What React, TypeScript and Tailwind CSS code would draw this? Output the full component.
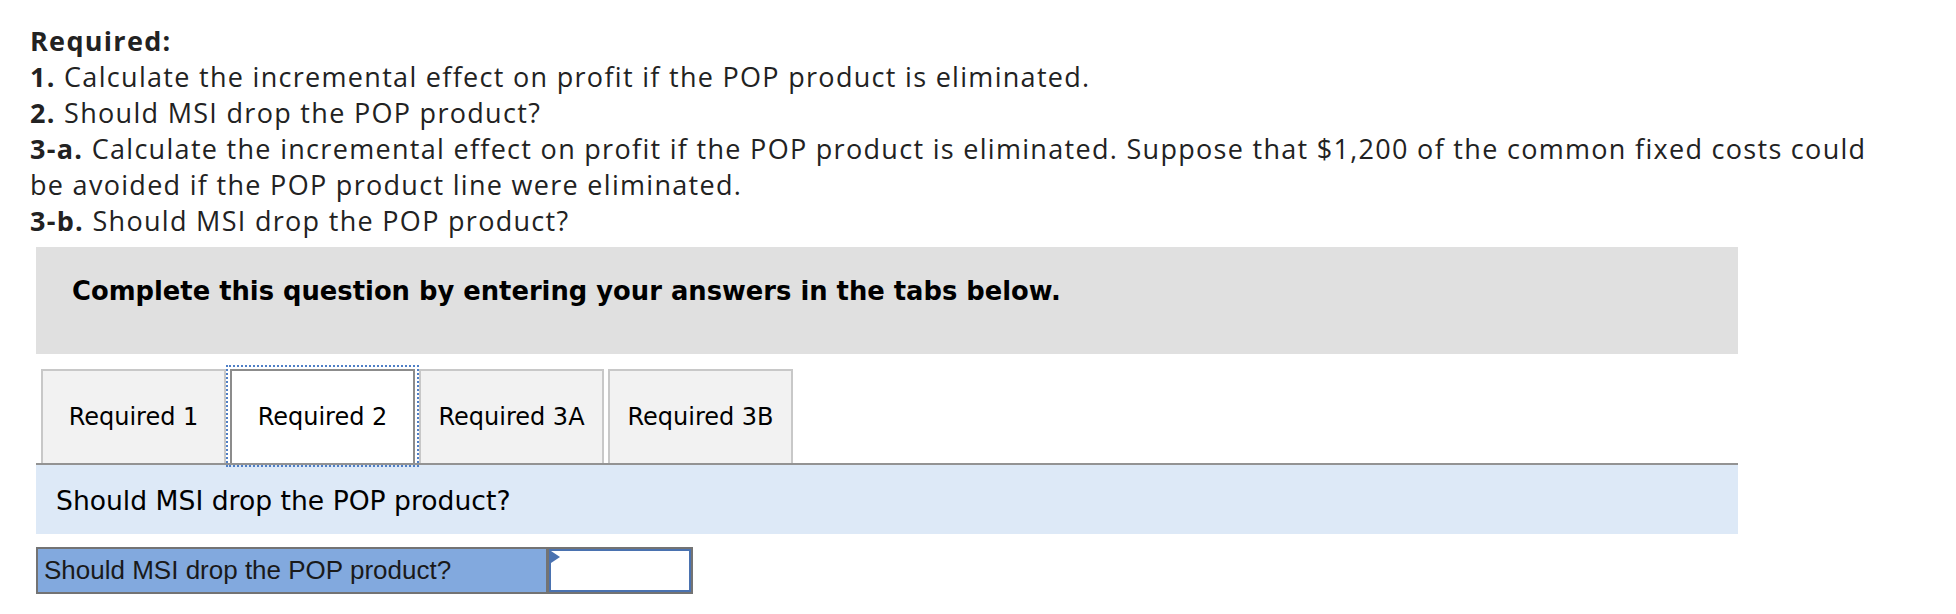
const tabs = ["Required 1", "Required 2", "Required 3A", "Required 3B"];

export default function App() {
  const active = "Required 2";

  return (
    <div className="min-h-screen bg-white pl-[30px] pt-[23px]">
      <div className="font-['Open_Sans',sans-serif] text-[27px] leading-[36px] tracking-[1.3px] text-[#222]">
        <p>
          <b>Required:</b>
        </p>
        <p>
          <b>1.</b> Calculate the incremental effect on profit if the POP product is eliminated.
        </p>
        <p>
          <b>2.</b> Should MSI drop the POP product?
        </p>
        <p className="whitespace-nowrap">
          <b>3-a.</b> Calculate the incremental effect on profit if the POP product is eliminated. Suppose that $1,200
          of the common fixed costs could
          <br />
          be avoided if the POP product line were eliminated.
        </p>
        <p>
          <b>3-b.</b> Should MSI drop the POP product?
        </p>
      </div>

      <div className="ml-[6px] w-[1702px] font-['DejaVu_Sans',sans-serif]">
        <div className="mt-[8px] h-[107px] bg-[#e0e0e0] pl-[36px] pt-[29px]">
          <p className="text-[25.8px] leading-[30px] font-bold text-black">
            Complete this question by entering your answers in the tabs below.
          </p>
        </div>

        <div className="mt-[15px] flex gap-[4px] pl-[5px]">
          {tabs.map((tab) =>
            tab === active ? (
              <button
                key={tab}
                className="flex h-[94px] w-[185px] items-center justify-center border-2 border-b-0 border-[#8c8c8c] bg-white text-[24px] text-black outline-2 outline-offset-2 outline-[#4f7fc6] outline-dotted"
              >
                {tab}
              </button>
            ) : (
              <button
                key={tab}
                className="flex h-[94px] w-[185px] items-center justify-center border-2 border-b-0 border-[#c8c8c8] bg-[#f2f2f2] text-[24px] text-black"
              >
                {tab}
              </button>
            )
          )}
        </div>
        <div className="h-[2px] bg-[#939393]" />

        <div className="h-[69px] bg-[#dde9f7] pl-[20px] pt-[21px]">
          <p className="text-[26.6px] leading-[30px] text-black">Should MSI drop the POP product?</p>
        </div>

        <div className="mt-[13px] flex h-[47px] w-[657px] border-2 border-[#737373]">
          <div className="flex w-[511px] items-center border-r-[3px] border-[#737373] bg-[#82a9de] pl-[6px] font-['Liberation_Sans',sans-serif] text-[26px] text-[#1a1a1a]">
            Should MSI drop the POP product?
          </div>
          <div className="relative flex-1 border-2 border-[#4a72b0] bg-white">
            <svg className="absolute left-0 top-0" width="9" height="12" viewBox="0 0 9 12">
              <polygon points="0,0 9,6 0,12" fill="#4a72b0" />
            </svg>
          </div>
        </div>
      </div>
    </div>
  );
}
